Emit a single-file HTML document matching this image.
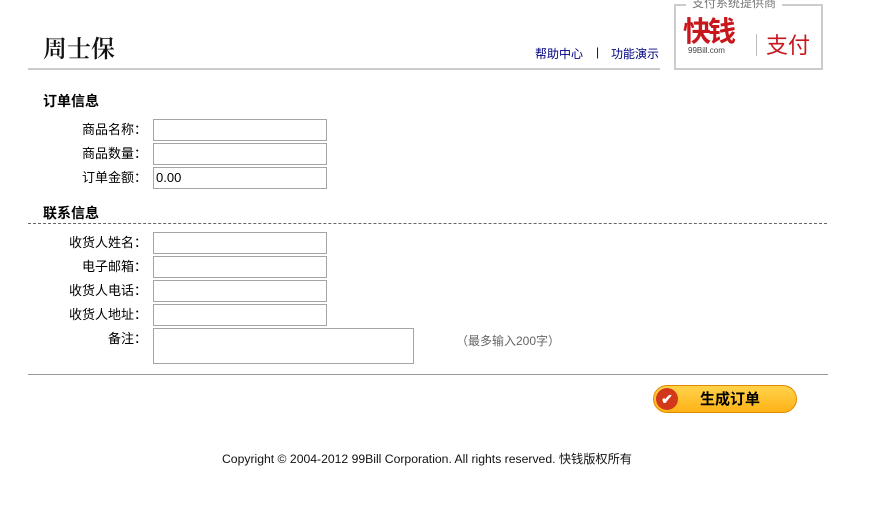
<!DOCTYPE html>
<html><head><meta charset="utf-8"><style>
body{margin:0;width:883px;height:505px;background:#fff;font-family:"Liberation Sans","Noto Sans CJK SC",sans-serif;font-size:13px;color:#000;position:relative;overflow:hidden}
.a{position:absolute}
.lbl{position:absolute;width:147px;left:0;text-align:right;font-size:13px;line-height:22px}
.in{position:absolute;left:153px;border:1px solid #a5a5a5;background:#fff;font-size:13px;line-height:20px;padding-left:2px;box-sizing:border-box;width:174px;height:22px}
</style></head><body>
<div class="a" style="left:43px;top:32px;font-family:'Noto Serif CJK SC',serif;font-size:24px;line-height:30px;color:#111;font-weight:600">周士保</div>
<div class="a" style="left:535px;top:45px;font-size:12px;color:#000080">帮助中心</div>
<div class="a" style="left:596px;top:45px;font-size:12px;color:#000080">|</div>
<div class="a" style="left:611px;top:45px;font-size:12px;color:#000080">功能演示</div>
<div class="a" style="left:28px;top:68px;width:632px;height:2px;background:#ccc"></div>
<div class="a" style="left:674px;top:4px;width:145px;height:62px;border:2px solid #ccc"></div>
<div class="a" style="left:686px;top:-4px;padding:0 6px;background:#fff;font-size:12px;color:#777;line-height:14px">支付系统提供商</div>
<div class="a" style="left:683px;top:16px;font-size:28px;font-weight:bold;color:#c8161d;line-height:32px;letter-spacing:-3px">快钱</div>
<div class="a" style="left:688px;top:46px;font-size:8px;color:#444">99Bill.com</div>
<div class="a" style="left:756px;top:34px;width:1px;height:22px;background:#bbb"></div>
<div class="a" style="left:766px;top:32px;font-size:22px;color:#c8161d;line-height:28px">支付</div>
<div class="a" style="left:43px;top:91px;font-weight:bold;font-size:14px">订单信息</div>
<div class="lbl" style="top:119px">商品名称：</div><div class="in" style="top:119px"></div>
<div class="lbl" style="top:143px">商品数量：</div><div class="in" style="top:143px"></div>
<div class="lbl" style="top:167px">订单金额：</div><div class="in" style="top:167px">0.00</div>
<div class="a" style="left:43px;top:203px;font-weight:bold;font-size:14px">联系信息</div>
<div class="a" style="left:28px;top:223px;width:799px;border-top:1px dashed #666"></div>
<div class="lbl" style="top:232px">收货人姓名：</div><div class="in" style="top:232px"></div>
<div class="lbl" style="top:256px">电子邮箱：</div><div class="in" style="top:256px"></div>
<div class="lbl" style="top:280px">收货人电话：</div><div class="in" style="top:280px"></div>
<div class="lbl" style="top:304px">收货人地址：</div><div class="in" style="top:304px"></div>
<div class="lbl" style="top:328px">备注：</div><div class="in" style="top:328px;width:261px;height:36px"></div>
<div class="a" style="left:456px;top:332px;font-size:12px;color:#666">（最多输入200字）</div>
<div class="a" style="left:28px;top:374px;width:800px;height:1px;background:#999"></div>
<div class="a" style="left:653px;top:385px;width:144px;height:28px;border-radius:15px;background:linear-gradient(#ffd24a,#ffb318);border:1px solid #e08a00;box-sizing:border-box"></div>
<div class="a" style="left:656px;top:388px;width:22px;height:22px;border-radius:50%;background:#d2381a;color:#fff;font-size:14px;font-weight:bold;text-align:center;line-height:22px">✔</div>
<div class="a" style="left:700px;top:391px;font-size:15px;font-weight:bold;line-height:18px">生成订单</div>
<div class="a" style="left:222px;top:449px;font-size:12.2px;color:#111">Copyright © 2004-2012 99Bill Corporation. All rights reserved. 快钱版权所有</div>
</body></html>
